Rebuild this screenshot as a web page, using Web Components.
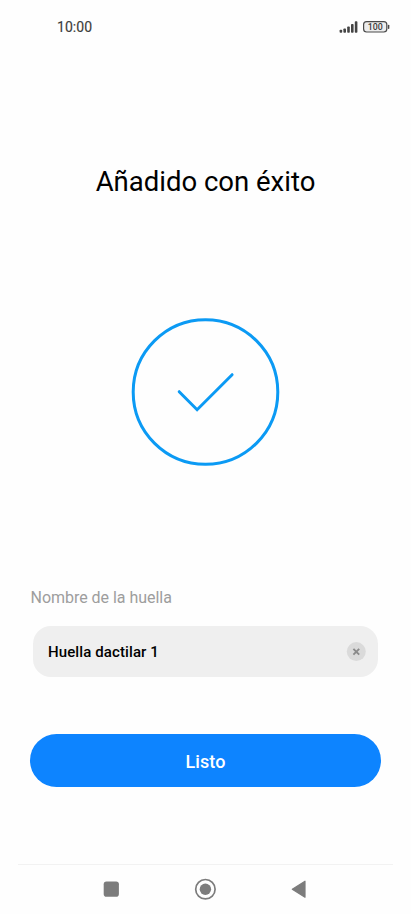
<!DOCTYPE html>
<html lang="es">
<head>
<meta charset="utf-8">
<title>Añadido con éxito</title>
<style>
html,body{margin:0;background:#fefefe}
body{font-family:Roboto,"Liberation Sans",sans-serif}
</style>
</head>
<body>
<fingerprint-screen></fingerprint-screen>
<script>
const define = (name, html) => customElements.define(name, class extends HTMLElement {
  constructor() {
    super();
    const t = document.createElement('template');
    t.innerHTML = html;
    this.attachShadow({mode: 'open'}).append(t.content.cloneNode(true));
  }
});

define('status-bar', `
<style>
:host{display:flex;align-items:center;justify-content:space-between;height:54px;padding:0 20px 0 57px;box-sizing:border-box;color:#3c3c3c}
time{font-size:14px;line-height:16px;letter-spacing:.05px;font-weight:400;-webkit-text-stroke:.15px #3c3c3c}
.icons{display:flex;gap:5px;align-items:center}
svg{display:block}
</style>
<time>10:00</time>
<div class="icons">
<svg width="19" height="14" viewBox="339 20 19 14" fill="#444"><rect x="339.6" y="29.8" width="2.6" height="3" rx=".8"/><rect x="343.4" y="28.4" width="2.6" height="4.4" rx=".8"/><rect x="347.2" y="26.4" width="2.6" height="6.4" rx=".8"/><rect x="351" y="24" width="2.6" height="8.8" rx=".8"/><rect x="354.8" y="21.2" width="2.6" height="11.6" rx=".8"/></svg>
<svg width="28" height="14" viewBox="363 20 28 14"><rect x="363.6" y="21.6" width="23.2" height="10.4" rx="3" fill="#ededed" stroke="#4a4a4a" stroke-width="1.2"/><path d="M388.6 25.4v2.8" stroke="#4a4a4a" stroke-width="1.5" stroke-linecap="round"/><text x="375.2" y="30.1" text-anchor="middle" font-family="Roboto" font-size="8.8" font-weight="500" fill="#3c3c3c">100</text></svg>
</div>`);

define('success-mark', `
<style>:host{display:block;width:150px;height:150px}svg{display:block}</style>
<svg width="150" height="150" viewBox="0 0 150 150" fill="none" stroke="#0b9af4" stroke-width="3" stroke-linecap="round"><circle cx="75.5" cy="75" r="72.3"/><path d="M49.2 74.7 67.1 92.7 102.1 57.7"/></svg>`);

define('name-field', `
<style>
:host{display:block}
label{display:block;height:22px;line-height:22px;font-size:16px;letter-spacing:-.03px;color:#9d9d9d;padding-left:30.5px}
.box{display:flex;align-items:center;justify-content:space-between;box-sizing:border-box;height:51px;margin:17px 33px 0;padding:0 12px 0 15px;border-radius:18px;background:#efefef}
.value{font-size:15px;letter-spacing:.11px;font-weight:500;color:#000;line-height:20px;padding-top:1px}
svg{display:block}
</style>
<label><slot name="label"></slot></label>
<div class="box"><span class="value"><slot></slot></span>
<svg width="20" height="20" viewBox="0 0 20 20"><circle cx="10.3" cy="9.6" r="9.5" fill="#dadada"/><path d="M7.4 6.8l5.8 5.8M13.2 6.8 7.4 12.6" stroke="#8a8a8a" stroke-width="1.9"/></svg></div>`);

define('pill-button', `
<style>:host{display:block}
button{display:block;width:100%;height:53px;border:0;border-radius:27px;background:#0d84ff;color:#fff;font:500 18px/55px Roboto,sans-serif;letter-spacing:.1px;padding:0}</style>
<button><slot></slot></button>`);

define('nav-bar', `
<style>
:host{display:block;height:50px}
.line{height:1px;margin:0 18px;background:#f2f2f2}
nav{display:flex;justify-content:space-between;align-items:center;height:48px;padding:0 100px 0 99px}
svg{display:block}
</style>
<div class="line"></div>
<nav>
<svg width="24" height="24" viewBox="0 0 24 24"><rect x="4.7" y="4.5" width="15.2" height="15.2" rx="2.8" fill="#7c7c7c"/></svg>
<svg width="24" height="24" viewBox="0 0 24 24"><circle cx="12.4" cy="12.2" r="9.7" fill="none" stroke="#7c7c7c" stroke-width="1.7"/><circle cx="12.4" cy="12.2" r="5.7" fill="#7c7c7c"/></svg>
<svg width="24" height="24" viewBox="0 0 24 24"><path d="M5.3 12.2 18 4.2V20.2Z" fill="#7c7c7c" stroke="#7c7c7c" stroke-width="1.2" stroke-linejoin="round"/></svg>
</nav>`);

define('fingerprint-screen', `
<style>
:host{display:flex;flex-direction:column;width:411px;height:914px;overflow:hidden;background:#fefefe}
h1{margin:108px 0 0;height:40px;font-size:27.5px;line-height:40px;font-weight:400;text-align:center;color:#000}
success-mark{margin:115px 0 0 130px}
name-field{margin-top:120px}
pill-button{margin:57px 30px 0}
nav-bar{margin-top:auto}
</style>
<status-bar></status-bar>
<h1>Añadido con éxito</h1>
<success-mark></success-mark>
<name-field><span slot="label">Nombre de la huella</span>Huella dactilar 1</name-field>
<pill-button>Listo</pill-button>
<nav-bar></nav-bar>`);
</script>
</body>
</html>
